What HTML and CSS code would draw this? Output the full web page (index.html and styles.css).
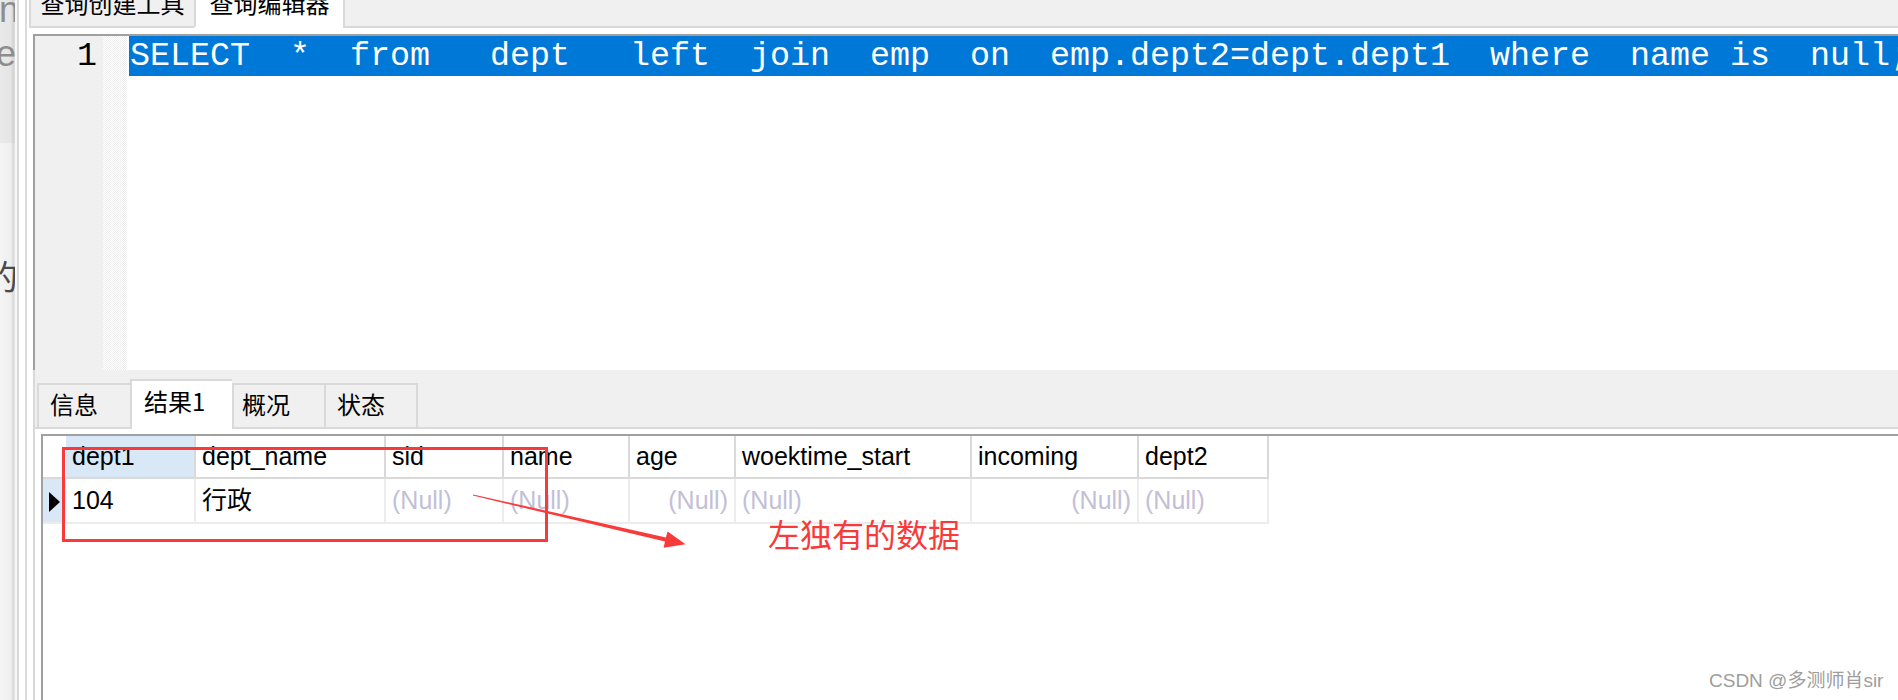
FILE: index.html
```html
<!DOCTYPE html>
<html lang="zh-CN">
<head>
<meta charset="utf-8">
<title>查询编辑器</title>
<link rel="stylesheet" href="styles.css">
</head>
<body>
<div class="screen">
  <aside class="side">
    <div class="blog">
      <div class="blog-top">
        <span class="g-n">n</span>
        <span class="g-e">e</span>
      </div>
      <div class="blog-rest">
        <span class="g-de">的</span>
      </div>
    </div>
    <div class="frame-lines"></div>
  </aside>

  <main class="main">
    <nav class="top-tabs">
      <div class="ttab t-build"><span>查询创建工具</span></div>
      <div class="ttab t-edit active"><span>查询编辑器</span></div>
      <div class="ttab-fill"></div>
    </nav>

    <section class="editor">
      <div class="gutter"><div class="lnum">1</div></div>
      <div class="checker"></div>
      <div class="code">
        <div class="line sel">SELECT  *  from   dept   left  join  emp  on  emp.dept2=dept.dept1  where  name is  null;</div>
      </div>
    </section>

    <nav class="res-tabs">
      <div class="rtab w-info">信息</div>
      <div class="rtab w-res active">结果1</div>
      <div class="rtab w-ov">概况</div>
      <div class="rtab w-st">状态</div>
    </nav>

    <section class="res-pane">
      <div class="grid">
        <div class="table">
          <div class="c h ind"></div>
          <div class="c h sel-col">dept1</div>
          <div class="c h">dept_name</div>
          <div class="c h">sid</div>
          <div class="c h">name</div>
          <div class="c h">age</div>
          <div class="c h">woektime_start</div>
          <div class="c h">incoming</div>
          <div class="c h">dept2</div>

          <div class="c d ind cur"><span class="tri"></span></div>
          <div class="c d">104</div>
          <div class="c d">行政</div>
          <div class="c d null">(Null)</div>
          <div class="c d null">(Null)</div>
          <div class="c d null num">(Null)</div>
          <div class="c d null">(Null)</div>
          <div class="c d null num">(Null)</div>
          <div class="c d null">(Null)</div>
        </div>
      </div>
    </section>
  </main>

  <div class="mark-box"></div>
  <svg class="mark-arrow" width="1898" height="700" viewBox="0 0 1898 700" xmlns="http://www.w3.org/2000/svg">
    <polygon fill="#f93a3a" points="473.1,494.4 665.9,537.4 667.6,531.4 685.5,544.2 663.6,547.8 665.0,541.6 472.9,495.6"/>
  </svg>
  <div class="mark-text">左独有的数据</div>
  <div class="watermark">CSDN @多测师肖sir</div>
</div>
</body>
</html>
```

FILE: styles.css
```css
* { box-sizing: border-box; }

html, body {
  margin: 0;
  padding: 0;
}

body {
  width: 1898px;
  height: 700px;
  overflow: hidden;
  background: #fff;
  color: #000;
  font-family: "Liberation Sans", "Noto Sans CJK SC", sans-serif;
}

.screen {
  position: relative;
  display: flex;
  width: 1898px;
  height: 700px;
}

/* ---------- left strip (page behind the window) ---------- */
.side {
  flex: none;
  width: 27px;
  display: flex;
}

.blog {
  width: 15px;
  display: flex;
  flex-direction: column;
  overflow: hidden;
}

.blog-top {
  height: 143px;
  background: linear-gradient(to right, #e9e9e9 0, #e5e5e5 11px, #d2d2d2 13px, #dedede 15px);
  color: #8e8e8e;
  font-family: "Liberation Sans", sans-serif;
  font-size: 36px;
  line-height: 1;
  display: flex;
  flex-direction: column;
}

.g-n {
  margin: -8px 0 0 -1px;
  height: 44px;
}

.g-e {
  margin-left: -4px;
}

.blog-rest {
  flex: 1;
  background: linear-gradient(to right, #f4f4f4 0, #efefef 11px, #d8d8d8 13px, #e6e6e6 15px);
}

.g-de {
  display: block;
  margin: 116px 0 0 -16px;
  font-family: "Noto Sans CJK SC", sans-serif;
  font-size: 34px;
  line-height: 34px;
  color: #4a4a4a;
}

.frame-lines {
  width: 12px;
  background: linear-gradient(to right, #f7f7f7 0 2px, #d9d9d9 2px 4px, #fff 4px 10px, #dadada 10px 12px);
}

/* ---------- main window ---------- */
.main {
  flex: 1;
  min-width: 0;
  display: flex;
  flex-direction: column;
}

.top-tabs {
  flex: none;
  height: 28px;
  margin-left: 2px;
  display: flex;
}

.ttab {
  height: 28px;
  overflow: hidden;
  background: #f0f0f0;
  border-left: 2px solid #d9d9d9;
  border-bottom: 2px solid #d9d9d9;
  text-align: center;
  font-family: "Noto Sans CJK SC", sans-serif;
  font-size: 24px;
  line-height: 24px;
}

.ttab span {
  display: block;
  margin-top: -9px;
}

.t-build { width: 165px; }

.t-edit { width: 149px; }

.ttab.active {
  background: #fff;
  border-bottom-color: #fff;
}

.ttab-fill {
  flex: 1;
  background: #f0f0f0;
  border-left: 2px solid #d9d9d9;
  border-bottom: 2px solid #d9d9d9;
}

/* ---------- SQL editor ---------- */
.editor {
  flex: none;
  height: 336px;
  margin: 6px 0 0 6px;
  border-top: 2px solid #a0a0a0;
  border-left: 2px solid #a0a0a0;
  display: flex;
}

.gutter {
  width: 68px;
  background: #f0f0f0;
}

.lnum {
  font-family: "Liberation Mono", monospace;
  font-size: 33.33px;
  line-height: 40px;
  text-align: right;
  padding-right: 6px;
}

.checker {
  width: 24px;
  background-color: #fff;
  background-image: repeating-conic-gradient(#eeeeee 0 25%, #fff 0 50%);
  background-size: 2px 2px;
}

.code {
  flex: 1;
  min-width: 0;
  overflow: hidden;
  padding-left: 2px;
}

.line {
  height: 40px;
  padding-left: 1px;
  font-family: "Liberation Mono", monospace;
  font-size: 33.33px;
  line-height: 40px;
  white-space: pre;
}

.line.sel {
  background: #0078d7;
  color: #fff;
}

/* ---------- result tabs ---------- */
.res-tabs {
  flex: none;
  height: 57px;
  margin-left: 6px;
  padding-left: 2px;
  border-left: 2px solid #d9d9d9;
  background: #f0f0f0;
  display: flex;
  align-items: flex-end;
}

.rtab {
  height: 44px;
  padding: 7px 0 0 11px;
  background: #f0f0f0;
  border-top: 2px solid #d9d9d9;
  border-left: 2px solid #d9d9d9;
  font-family: "Noto Sans CJK SC", sans-serif;
  font-size: 24px;
  line-height: 24px;
}

.w-info { width: 93px; }
.w-res { width: 102px; }
.w-ov { width: 92px; padding-left: 8px; }
.w-st { width: 94px; border-right: 2px solid #d9d9d9; }

.rtab.active {
  position: relative;
  z-index: 1;
  height: 50px;
  margin-bottom: -2px;
  padding: 8px 0 0 12px;
  background: #fff;
}

/* ---------- result grid ---------- */
.res-pane {
  flex: 1;
  min-height: 0;
  margin-left: 6px;
  padding: 5px 0 0 6px;
  border-left: 2px solid #d9d9d9;
  border-top: 2px solid #d9d9d9;
  background: #fff;
}

.grid {
  height: 100%;
  border-top: 2px solid #a0a0a0;
  border-left: 2px solid #a0a0a0;
}

.table {
  display: grid;
  grid-template-columns: 23px 130px 190px 118px 126px 106px 236px 167px 130px;
  grid-template-rows: 43px 45px;
  width: max-content;
}

.c {
  padding: 0 6px;
  white-space: nowrap;
  overflow: hidden;
  font-family: "Liberation Sans", "Noto Sans CJK SC", sans-serif;
  font-size: 25px;
  border-right: 2px solid #d9d9d9;
  border-bottom: 2px solid #d9d9d9;
}

.c.h { line-height: 41px; }

.c.d {
  line-height: 43px;
  border-right-color: #ececec;
  border-bottom-color: #ececec;
}

.c.ind { padding: 0; }

.c.h.ind { border-right-color: #fff; }

.sel-col { background: #d9e8f6; }

.cur {
  background: #d9e8f6;
  display: flex;
  align-items: center;
}

.tri {
  display: block;
  margin: 3px 0 0 6px;
  width: 0;
  height: 0;
  border-left: 11px solid #000;
  border-top: 10px solid transparent;
  border-bottom: 10px solid transparent;
}

.null { color: #c2c0d6; }

.num {
  text-align: right;
  padding-right: 6px;
}

/* ---------- annotations laid over the screenshot ---------- */
.mark-box {
  position: absolute;
  left: 62px;
  top: 447px;
  width: 486px;
  height: 95px;
  border: 3px solid #f93a3a;
}

.mark-arrow {
  position: absolute;
  left: 0;
  top: 0;
  pointer-events: none;
}

.mark-text {
  position: absolute;
  left: 768px;
  top: 513px;
  font-family: "Noto Sans CJK SC", sans-serif;
  font-size: 32px;
  line-height: 40px;
  color: #f93a3a;
}

.watermark {
  position: absolute;
  left: 1709px;
  top: 669px;
  font-family: "Liberation Sans", "Noto Sans CJK SC", sans-serif;
  font-size: 19px;
  line-height: 24px;
  color: #9d9d9d;
  text-shadow: 0 0 1px #fff;
}
```
